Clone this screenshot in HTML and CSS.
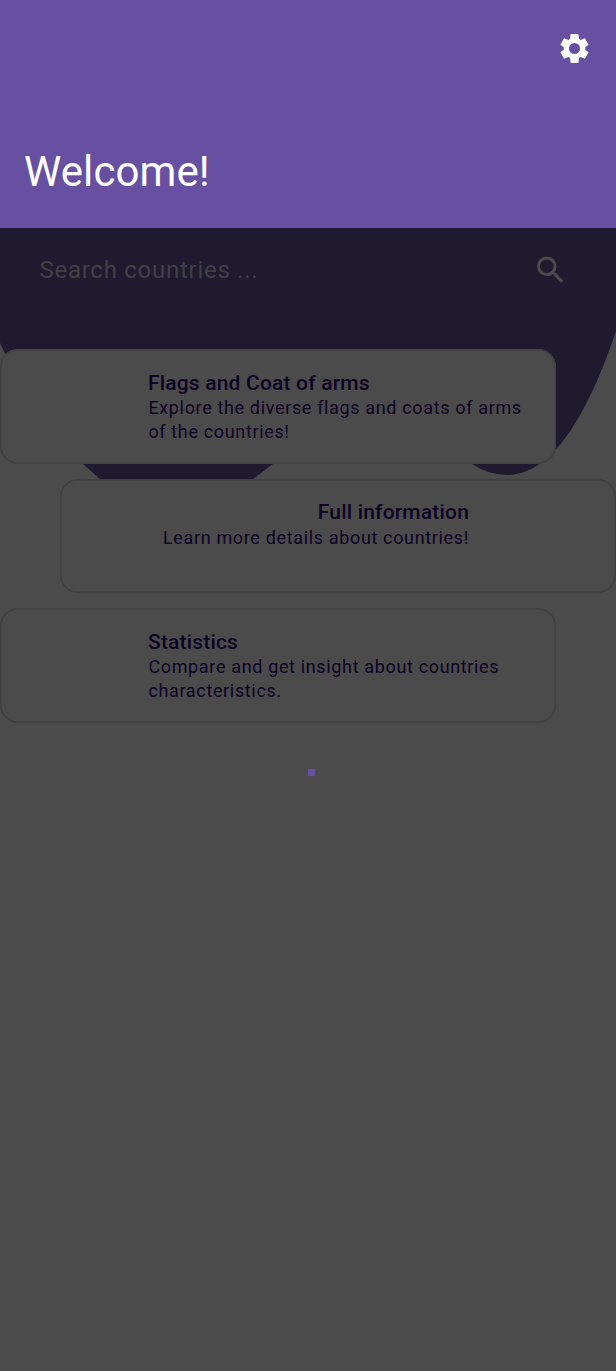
FILE: index.html
```html
<!DOCTYPE html>
<html lang="en">
<head>
<meta charset="utf-8">
<title>Countries</title>
<link rel="stylesheet" href="styles.css">
</head>
<body>
<div class="screen">
  <header class="header">
    <svg class="icon settings" viewBox="0 0 24 24"><path fill-rule="evenodd" d="M9.35 22l-.4-3.5q-.5-.2-1.1-.6l-3 1.2-2.5-4.45 2.3-1.75v-1.8l-2.3-1.75 2.5-4.45 3 1.2q.6-.4 1.1-.6l.4-3.5h5.3l.4 3.5q.5.2 1.1.6l3-1.2 2.5 4.45-2.3 1.75v1.8l2.3 1.75-2.5 4.45-3-1.2q-.6.4-1.1.6l-.4 3.5zM12 8.2a3.8 3.8 0 1 0 0 7.6a3.8 3.8 0 1 0 0-7.6z"/></svg>
    <h1 class="welcome">Welcome!</h1>
  </header>
  <main class="content">
    <svg class="wave" viewBox="0 0 616 252"><path d="M0 0H616V103C591 177 556 247 507 247Q489 247 472 236C440 220 410 166 366 166C323 166 304 210 273 236L253 251H100L83 236Q33 187 0 115Z"/></svg>
    <div class="search">
      <span class="placeholder">Search countries ...</span>
      <svg class="icon" viewBox="0.3 0 24 24"><path d="M15.5 14h-.79l-.28-.27A6.47 6.47 0 0 0 16 9.5 6.5 6.5 0 1 0 9.5 16c1.61 0 3.09-.59 4.23-1.57l.27.28v.79l5 4.99L20.49 19l-4.99-5zm-6 0a4.5 4.5 0 1 1 0-9 4.5 4.5 0 0 1 0 9z"/></svg>
    </div>
    <div class="cards">
      <section class="card">
        <h2 class="title">Flags and Coat of arms</h2>
        <p class="text">Explore the diverse flags and coats of arms<br>of the countries!</p>
      </section>
      <section class="card card-right">
        <h2 class="title">Full information</h2>
        <p class="text">Learn more details about countries!</p>
      </section>
      <section class="card">
        <h2 class="title">Statistics</h2>
        <p class="text">Compare and get insight about countries<br>characteristics.</p>
      </section>
    </div>
    <div class="loader"></div>
  </main>
</div>
</body>
</html>
```
FILE: styles.css
```css
* { box-sizing: border-box; }
body { margin: 0; font-family: Roboto, sans-serif; background: #4b4b4b; }
.screen { width: 616px; height: 1371px; overflow: hidden; display: flex; flex-direction: column; }
.header {
  height: 228px;
  padding: 30.5px 24px 31px;
  background: #6750a2;
  color: #fff;
  display: flex;
  flex-direction: column;
  justify-content: space-between;
}
.icon { width: 36px; height: 36px; fill: currentColor; flex: none; }
.settings { align-self: flex-end; width: 35px; height: 35px; }
.welcome { margin: 0; font-size: 42px; font-weight: 400; line-height: 50px; letter-spacing: 0.1px; }
.content { position: relative; flex: 1; }
/* wave backdrop behind the search bar and cards */
.wave { position: absolute; top: 0; left: 0; width: 616px; height: 252px; fill: #1f1a30; }
.search {
  position: relative;
  height: 84px;
  padding: 0 47px 0 39.5px;
  display: flex;
  align-items: center;
  justify-content: space-between;
  color: #4b4b4b;
}
.placeholder { font-size: 24px; letter-spacing: 0.73px; color: #414141; }
.cards { position: relative; display: flex; flex-direction: column; gap: 15px; padding-top: 37px; }
.card {
  width: 556.4px;
  height: 114.5px;
  padding: 21px 0 0 148px;
  box-shadow: inset 0 0 0 1.5px #404040;
  border-radius: 18px;
  background: #4b4b4b;
  color: #0c0124;
}
.card-right { align-self: flex-end; width: 556px; padding: 20.5px 147px 0 0; text-align: right; }
.card-right .text { padding-top: 1px; }
.title { margin: 0; font-size: 21px; font-weight: 500; line-height: 26px; letter-spacing: 0.18px; }
.text { margin: 0; padding-left: 0.4px; font-size: 18px; line-height: 24px; letter-spacing: 0.65px; white-space: nowrap; }
.loader { width: 6.5px; height: 6.5px; margin: 46.5px 0 0 308px; background: #6750a2; transform: rotate(5deg); }
```
